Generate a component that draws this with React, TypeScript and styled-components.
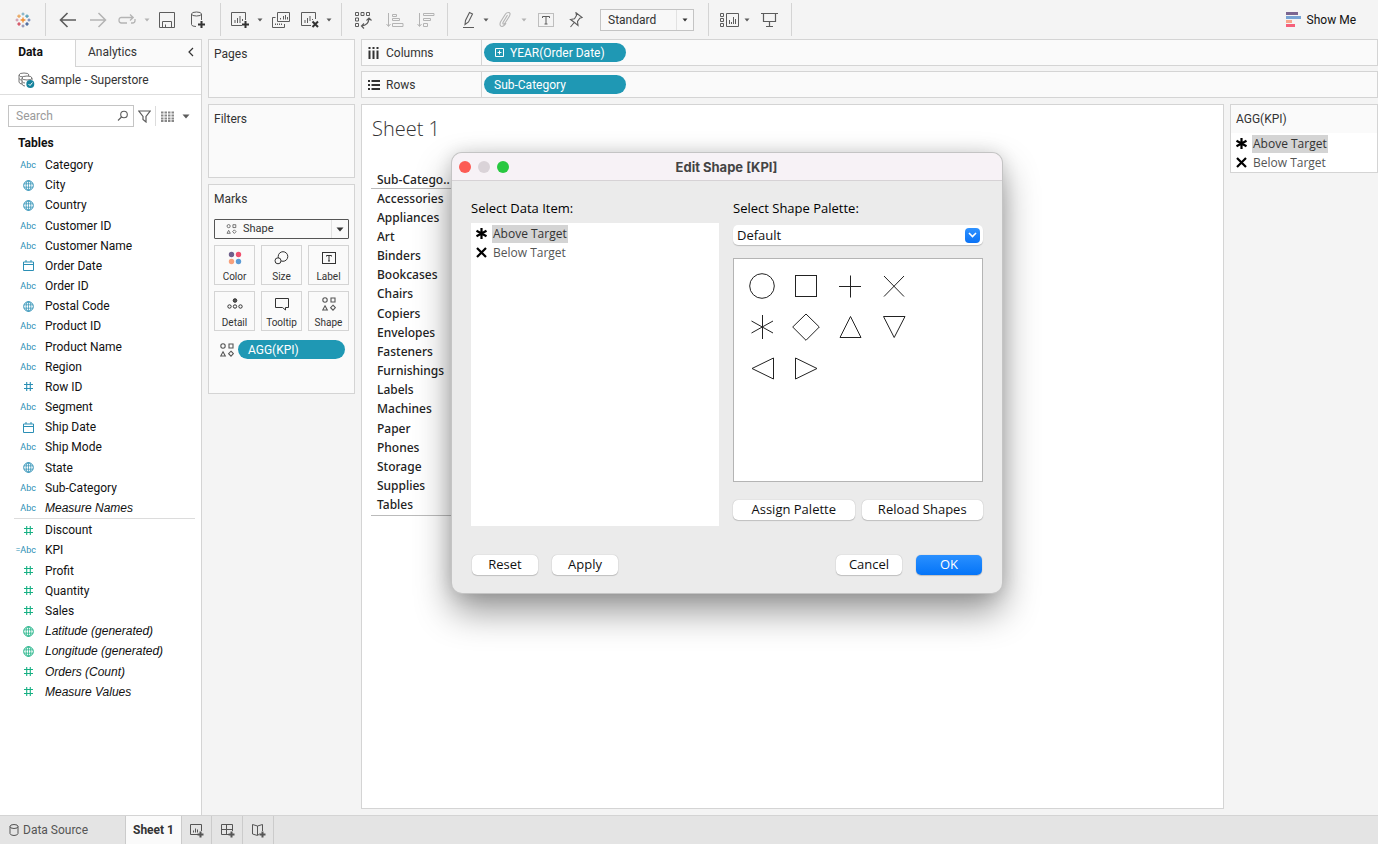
import React from "react";
import styled, { createGlobalStyle, css } from "styled-components";

const ui = `Roboto, "Liberation Sans", sans-serif`;
const viz = `"Open Sans", "Noto Sans", sans-serif`;
const mac = `"Open Sans", "Noto Sans", sans-serif`;
const teal = "#1f98b4";
const dim = "#2b8fb5";
const meas = "#17b083";
const line = "#d4d4d4";

const Global = createGlobalStyle`
  *, *::before, *::after { box-sizing: border-box; }
  body { margin: 0; font: 12px/16px ${ui}; color: #333; background: #f4f4f4; }
  button, input, select { font: inherit; color: inherit; margin: 0; }
  ul { list-style: none; margin: 0; padding: 0; }
  h1, h2, h3 { margin: 0; font-weight: 400; }
  svg { display: block; flex: none; }
`;

/* ---------- page ---------- */
const Page = styled.div`
  position: relative;
  min-height: 100vh;
  display: flex;
  flex-direction: column;
`;
const Main = styled.main`
  flex: 1;
  display: flex;
`;

/* ---------- toolbar ---------- */
const Toolbar = styled.header`
  display: flex;
  align-items: center;
  height: 39px;
  background: #f4f4f4;
`;
const Group = styled.div<{ $pad?: string }>`
  display: flex;
  align-items: center;
  height: 33px;
  padding: ${(p) => p.$pad ?? "0 5px"};
  border-right: 1px solid ${line};
`;
const Tool = styled.button<{ $w: number; $off?: boolean }>`
  width: ${(p) => p.$w}px;
  height: 26px;
  padding: 0;
  border: 0;
  background: none;
  color: ${(p) => (p.$off ? "#b4b4b4" : "#5c5c5c")};
  display: flex;
  align-items: center;
  justify-content: center;
`;
const ShowMe = styled.button`
  margin-left: auto;
  margin-right: 22px;
  padding: 0;
  border: 0;
  background: none;
  color: #111;
  display: flex;
  align-items: center;
  gap: 5px;
`;
const SelectWrap = styled.div`
  position: relative;
  display: flex;
  align-items: center;
`;
const FitWrap = styled(SelectWrap)`
  margin-left: 11px;
`;
const FitSelect = styled.select`
  appearance: none;
  width: 94px;
  height: 22px;
  padding: 0 7px;
  border: 1px solid #c4c4c4;
  border-radius: 0;
  background: #f8f8f8;
`;
const SelectArrow = styled.span<{ $w: number }>`
  position: absolute;
  right: 1px;
  top: 1px;
  bottom: 1px;
  width: ${(p) => p.$w}px;
  border-left: 1px solid #e2e2e2;
  display: flex;
  align-items: center;
  justify-content: center;
  pointer-events: none;
`;

/* ---------- data pane ---------- */
const DataPane = styled.aside`
  width: 202px;
  flex: none;
  background: #fff;
  border-top: 1px solid ${line};
  border-right: 1px solid ${line};
  color: #111;
`;
const Tabs = styled.div`
  display: flex;
  height: 27px;
`;
const Tab = styled.button<{ $on?: boolean }>`
  border: 0;
  padding: 0 0 3px;
  background: #fff;
  ${(p) =>
    p.$on
      ? css`
          width: 75px;
          padding-right: 14px;
          font-weight: 700;
        `
      : css`
          flex: 1;
          padding-left: 12px;
          padding-right: 6px;
          background: #fafafa;
          border-left: 1px solid ${line};
          border-bottom: 1px solid ${line};
          color: #333;
          display: flex;
          align-items: center;
          justify-content: space-between;
        `}
`;
const Source = styled.div`
  display: flex;
  align-items: center;
  gap: 6px;
  height: 28px;
  padding: 0 18px 1px;
  border-bottom: 1px solid #dedede;
  color: #333;
`;
const SearchRow = styled.div`
  display: flex;
  align-items: center;
  margin-top: 10px;
  padding-left: 8px;
  height: 22px;
  color: #5c5c5c;
`;
const SearchBox = styled.label`
  position: relative;
  width: 126px;
  height: 22px;
  svg { position: absolute; right: 5px; top: 5px; }
`;
const SearchInput = styled.input`
  width: 100%;
  height: 22px;
  padding: 0 24px 0 7px;
  border: 1px solid #c4c4c4;
  background: #fff;
  &::placeholder { color: #9a9a9a; opacity: 1; }
`;
const Plain = styled.button<{ $w: number; $rule?: boolean }>`
  width: ${(p) => p.$w}px;
  height: 20px;
  padding: 0;
  border: 0;
  border-right: ${(p) => (p.$rule ? "1px solid #dcdcdc" : "0")};
  background: none;
  display: flex;
  align-items: center;
  justify-content: center;
`;
const TablesTitle = styled.h2`
  margin: 8px 0 4px 18px;
  font-size: 12px;
  line-height: 16px;
  font-weight: 700;
`;
const Fields = styled.ul<{ $h: number; $rule?: boolean }>`
  display: grid;
  grid-auto-rows: 1fr;
  height: ${(p) => p.$h}px;
  margin: 0 6px 1px 14px;
  border-bottom: ${(p) => (p.$rule ? "1px solid #dcdcdc" : "0")};
`;
const Field = styled.li<{ $italic?: boolean }>`
  display: flex;
  align-items: center;
  white-space: nowrap;
  ${(p) => p.$italic && css`font-family: "Liberation Sans", sans-serif; font-style: italic;`}
`;
const FieldIcon = styled.span<{ $c: string }>`
  width: 31px;
  flex: none;
  padding-right: 9px;
  color: ${(p) => p.$c};
  font-family: ${ui};
  font-size: 9px;
  font-style: normal;
  display: flex;
  justify-content: flex-end;
`;
const Glyph = styled.span`
  width: 16px;
  display: flex;
  justify-content: center;
`;

/* ---------- cards ---------- */
const Cards = styled.section`
  width: 159px;
  flex: none;
  padding: 0 6px;
  display: flex;
  flex-direction: column;
  gap: 6px;
`;
const Card = styled.div<{ $h: number }>`
  min-height: ${(p) => p.$h}px;
  border: 1px solid ${line};
  background: #fafafa;
  padding: 6px 5px;
`;
const CardTitle = styled.h2`
  font-size: 12px;
  line-height: 16px;
`;
const MarkSelect = styled.select`
  appearance: none;
  width: 100%;
  height: 20px;
  padding: 0 28px;
  border: 1px solid #555;
  border-radius: 1px;
  background: #fafafa;
  font-size: 11px;
`;
const MarkSelectWrap = styled(SelectWrap)`
  margin: 12px 0 6px;
`;
const SelectGlyph = styled.span`
  position: absolute;
  left: 12px;
  pointer-events: none;
`;
const MarkGrid = styled.div`
  display: grid;
  grid-template-columns: repeat(3, 1fr);
  gap: 6px;
`;
const MarkButton = styled.button`
  height: 40px;
  padding: 4px 0 0;
  border: 1px solid ${line};
  background: #fafafa;
  font-size: 10px;
  line-height: 14px;
  display: flex;
  flex-direction: column;
  align-items: center;
  justify-content: center;
  gap: 4px;
  svg { height: 16px; }
`;
const PillRow = styled.div`
  display: flex;
  align-items: center;
  padding: 9px 4px 0 6px;
  gap: 4px;
`;
const Pill = styled.button<{ $grow?: boolean }>`
  width: ${(p) => (p.$grow ? "auto" : "142px")};
  flex: ${(p) => (p.$grow ? "1" : "none")};
  height: 19px;
  padding: 0 10px;
  border: 0;
  border-radius: 10px;
  background: ${teal};
  color: #fff;
  text-align: left;
  display: flex;
  align-items: center;
  gap: 5px;
`;

/* ---------- shelves and view ---------- */
const Work = styled.section`
  flex: 1;
  min-width: 0;
  display: flex;
  flex-direction: column;
  gap: 5px;
`;
const Shelf = styled.div`
  display: flex;
  height: 27px;
  border: 1px solid ${line};
  background: #fafafa;
`;
const ShelfLabel = styled.div`
  width: 120px;
  padding-left: 5px;
  border-right: 1px solid ${line};
  display: flex;
  align-items: center;
  gap: 6px;
`;
const ShelfDrop = styled.div`
  flex: 1;
  padding: 0 2px;
  display: flex;
  align-items: center;
`;
const ViewRow = styled.div`
  flex: 1;
  display: flex;
  gap: 6px;
  padding: 1px 0 6px;
`;
const View = styled.div`
  flex: 1;
  border: 1px solid ${line};
  background: #fff;
  padding: 10px 9px;
  font-family: ${viz};
`;
const SheetTitle = styled.h1`
  padding-left: 1px;
  font-size: 20px;
  line-height: 28px;
  font-weight: 300;
`;
const CrossTab = styled.table`
  width: 480px;
  height: 344px;
  margin-top: 29px;
  border-collapse: collapse;
  border-bottom: 1px solid #bbb;
  font-family: "Noto Sans", ${viz};
  font-size: 12px;
  line-height: 16px;
  th { padding: 0 6px; text-align: left; font-weight: 500; color: #222; }
  thead th { border-bottom: 1px solid #bbb; }
`;
const Legend = styled.aside`
  width: 148px;
  align-self: flex-start;
  border: 1px solid ${line};
  background: #fff;
`;
const LegendTitle = styled.h2`
  height: 28px;
  padding: 6px 5px;
  font-size: 12px;
  line-height: 16px;
  background: #fafafa;
`;
const Items = styled.ul`
  font-family: ${viz};
  padding: 1px 4px 0;
`;
const Item = styled.li<{ $on?: boolean }>`
  display: flex;
  align-items: center;
  gap: 4px;
  height: 19px;
  color: ${(p) => (p.$on ? "#333" : "#555")};
  span {
    padding: 0 1px;
    line-height: 18px;
    background: ${(p) => (p.$on ? "#d4d4d4" : "none")};
  }
`;

/* ---------- bottom bar ---------- */
const Bottom = styled.footer`
  display: flex;
  height: 29px;
  border-top: 1px solid ${line};
  background: #e4e4e4;
`;
const BottomTab = styled.button<{ $w: number; $on?: boolean; $start?: boolean }>`
  width: ${(p) => p.$w}px;
  padding: 0 0 0 ${(p) => (p.$start ? 9 : 0)}px;
  border: 0;
  border-right: 1px solid #cbcbcb;
  background: ${(p) => (p.$on ? "#fafafa" : "none")};
  color: ${(p) => (p.$on ? "#333" : "#555")};
  font-weight: ${(p) => (p.$on ? 700 : 400)};
  display: flex;
  align-items: center;
  justify-content: ${(p) => (p.$start ? "flex-start" : "center")};
  gap: 4px;
`;

/* ---------- dialog ---------- */
const Dialog = styled.div`
  position: absolute;
  left: 452px;
  top: 153px;
  width: 550px;
  border-radius: 10px;
  background: #ebebeb;
  box-shadow: 0 0 0 1px #c4c4c4, 0 18px 36px rgba(0, 0, 0, 0.42), 0 0 18px rgba(0, 0, 0, 0.14);
  font: 13px/16px ${mac};
  color: #111;
`;
const TitleBar = styled.div`
  display: grid;
  grid-template-columns: 1fr auto 1fr;
  align-items: center;
  height: 28px;
  padding: 0 8px 0 7px;
  border-bottom: 1px solid #d6d2d5;
  border-radius: 10px 10px 0 0;
  background: #f7f2f6;
`;
const Lights = styled.div`
  display: flex;
  gap: 7px;
`;
const Light = styled.button<{ $c: string }>`
  width: 12px;
  height: 12px;
  padding: 0;
  border: 0;
  border-radius: 50%;
  background: ${(p) => p.$c};
`;
const DialogTitle = styled.h2`
  font: 700 13px/16px Inter, ${ui};
  color: #444;
`;
const Panels = styled.div`
  display: flex;
  gap: 14px;
  padding: 19px 19px 0;
`;
const Panel = styled.div<{ $list?: boolean }>`
  flex: ${(p) => (p.$list ? "0 0 248px" : "1")};
`;
const PanelLabel = styled.label`
  display: block;
  margin-bottom: 7px;
  color: #000;
`;
const ItemBox = styled.div`
  height: 303px;
  background: #fff;
  font-size: 12px;
`;
const PaletteSelect = styled.select`
  appearance: none;
  width: 100%;
  height: 20px;
  padding: 0 4px;
  border: 0;
  border-radius: 5px;
  background: #fff;
  box-shadow: 0 1px 1px rgba(0, 0, 0, 0.2);
`;
const PaletteWrap = styled(SelectWrap)`
  margin: 9px 0 13px;
`;
const BlueArrow = styled.span`
  position: absolute;
  right: 3px;
  width: 15px;
  height: 15px;
  border-radius: 4px;
  background: linear-gradient(#2f92ff, #0a72f5);
  display: flex;
  align-items: center;
  justify-content: center;
  pointer-events: none;
`;
const ShapeBox = styled.div`
  height: 224px;
  padding: 6px 56px 6px 6px;
  border: 1px solid #b4b4b4;
  background: #fff;
  display: flex;
  flex-wrap: wrap;
  align-content: flex-start;
`;
const ShapeCell = styled.button`
  width: 44px;
  height: 41px;
  padding: 0;
  border: 0;
  background: none;
  display: flex;
  align-items: center;
  justify-content: center;
`;
const PaletteButtons = styled.div`
  display: flex;
  gap: 7px;
  margin-top: 18px;
`;
const MacButton = styled.button<{ $primary?: boolean; $grow?: boolean }>`
  flex: ${(p) => (p.$grow ? "1" : "none")};
  width: ${(p) => (p.$grow ? "auto" : "66px")};
  height: 20px;
  padding: 0 0 2px;
  border: 0;
  border-radius: 5px;
  background: ${(p) => (p.$primary ? "linear-gradient(#2a90ff, #0474f8)" : "#fff")};
  color: ${(p) => (p.$primary ? "#fff" : "#111")};
  box-shadow: 0 0 1px rgba(0, 0, 0, 0.3), 0 1px 1px rgba(0, 0, 0, 0.16);
`;
const Actions = styled.div`
  display: flex;
  gap: 14px;
  padding: 29px 20px 18px;
`;
const Push = styled.span`
  flex: 1;
`;

/* ---------- drawings ---------- */
type Kids = { w?: number; h?: number; s?: number; children: React.ReactNode };
const Svg = ({ w = 16, h = 16, s = 1, children }: Kids) => (
  <svg width={w} height={h} viewBox={`0 0 ${w} ${h}`} fill="none" stroke="currentColor" strokeWidth={s} aria-hidden="true">
    {children}
  </svg>
);
const Caret = ({ big }: { big?: boolean }) =>
  big ? (
    <Svg w={8} h={5}><path d="M0.5 0.5H7.5L4 4.5Z" fill="currentColor" stroke="none" /></Svg>
  ) : (
    <Svg w={6} h={4}><path d="M0.5 0.5H5.5L3 3.5Z" fill="currentColor" stroke="none" /></Svg>
  );

const plus = (x: number, y: number, r: number, c: string, s: number) => (
  <path key={`${x}-${y}`} d={`M${x - r} ${y}H${x + r}M${x} ${y - r}V${y + r}`} stroke={c} strokeWidth={s} />
);
const Logo = () => (
  <Svg>
    {plus(8, 8, 2.4, "#f08a2c", 1.3)}
    {plus(8, 2, 1.5, "#6aa5bd", 1)}
    {plus(8, 14, 1.5, "#7a7fa8", 1)}
    {plus(2, 8, 1.5, "#c98aa0", 1)}
    {plus(14, 8, 1.5, "#5f78b0", 1)}
    {plus(4, 4.2, 1.8, "#e9a052", 1.2)}
    {plus(12, 4.2, 1.8, "#4b9ab5", 1.2)}
    {plus(4, 12, 1.8, "#d0354a", 1.2)}
    {plus(12, 12, 1.8, "#2c4f8c", 1.2)}
  </Svg>
);
const Back = () => <Svg w={18} s={1.6}><path d="M17 8H1.5M8.5 1L1.5 8L8.5 15" /></Svg>;
const Forward = () => <Svg w={18} s={1.5}><path d="M1 8H16.5M9.5 1L16.5 8L9.5 15" /></Svg>;
const Redo = () => (
  <Svg w={18} h={11} s={1.3}><path d="M9 9H3.500Q1 9 1 6.200T3.500 3.500H15M12 0.500L15.200 3.500L12 6.500M13 9H14.500Q17 9 17 6.500V5" /></Svg>
);
const Save = () => <Svg><path d="M0.5 0.5H15.500V15.500H0.500ZM3.500 15V9.500H12.500V15M6.500 15V12.500" /></Svg>;
const Db = () => (
  <Svg w={16} h={18}>
    <ellipse cx="6.500" cy="3" rx="5" ry="2" />
    <path d="M1.500 3V13.500Q1.500 15.500 6 15.500M11.500 3V9" />
    <path d="M11.500 10V17M8 13.500H15" stroke="#333" strokeWidth="2" />
  </Svg>
);
const NewSheet = () => (
  <Svg w={19} h={18}>
    <path d="M11 14.500H0.500V1.500H14.500V9M4 12V9M6.500 12V7M9 12V5M11.500 10V8" />
    <path d="M14.500 10V17M11 13.500H18" stroke="#333" strokeWidth="2" />
  </Svg>
);
const Duplicate = () => (
  <Svg w={18} h={16}>
    <path d="M5.500 0.500H17.500V9.500H5.500ZM8.500 7.500V6M11.500 7.500V4M13.500 7.500V3M15.500 7.500V5M3.500 5.500H0.500V15.500H12.500V12M3.500 13V11.500M5.500 13V11.500M7.500 13V11.500M9.500 13V11.500" />
  </Svg>
);
const Clear = () => (
  <Svg w={19} h={18}>
    <path d="M10 14.500H0.500V1.500H14.500V8M4 12V9M6.500 12V7M9 10V5M11.500 9V8" />
    <path d="M11.500 10.500L17 16M17 10.500L11.500 16" stroke="#333" strokeWidth="2" />
  </Svg>
);
const Swap = () => (
  <Svg w={18} h={18}>
    <path d="M1.500 1.500H4.500V4.500H1.500ZM7 1.500H10V4.500H7ZM12.500 1.500H15.500V4.500H12.500ZM1.500 7H4.500V10H1.500ZM1.500 12.500H4.500V15.500H1.500Z" />
    <path d="M7.500 15Q14.500 14.500 15 7.500M10 12.500L7.500 15L10 17.500M12.500 9.500L15 7L17.500 9.500" strokeWidth="1.200" />
  </Svg>
);
const SortAsc = () => (
  <Svg w={18}>
    <path d="M2.500 1V14M0.500 12L2.500 14.500L4.500 12M6.500 2.500H10.500V4.500H6.500ZM6.500 6.500H13.500V8.500H6.500ZM6.500 11.500H17V14.500H6.500Z" />
  </Svg>
);
const SortDesc = () => (
  <Svg w={18}>
    <path d="M2.500 1V14M0.500 12L2.500 14.500L4.500 12M6.500 1.500H17V3.500H6.500ZM6.500 6.500H13.500V8.500H6.500ZM6.500 11.500H10.500V14.500H6.500Z" />
  </Svg>
);
const Highlight = () => <Svg w={14} h={17} s={1.1}><path d="M1 16.500H12M3 13.500L3.500 9.500L7.500 1.500L10.500 3L6.500 11L3 13.500Z" /></Svg>;
const Clip = () => (
  <Svg w={14} h={17} s={1.1}><path d="M9.500 4L5 11.500Q4.500 13.500 6 13Q7 12.500 11.500 5Q13 1.500 10.500 1.500Q8.500 1.500 7.500 3L2.500 11Q1 15 4 15.500Q6 15.500 8 12" /></Svg>
);
const TextMark = () => (
  <Svg w={16} h={14}>
    <rect x="0.5" y="0.5" width="15" height="13" strokeDasharray="1 1" stroke="#888" />
    <path d="M4.500 5V3.500H11.500V5M8 3.500V11M6.500 11H9.500" />
  </Svg>
);
const MarkLabel = () => (
  <Svg w={14} h={12}>
    <rect x="0.5" y="0.5" width="13" height="11" />
    <path d="M4.500 4.500V3.500H9.500V4.500M7 3.500V9M6 9H8" />
  </Svg>
);
const Pin = () => (
  <Svg w={14} h={16} s={1.1}><path d="M7 0.800L13.200 5.500L10.800 6.200L8.500 9.500L9 13.500L5.500 10.500L1.500 7.500L5.500 6.800L7.500 3.500ZM5.200 10.500L1.500 15" /></Svg>
);
const Cards4 = () => (
  <Svg w={20} h={14}>
    <path d="M6.500 0.500H18.500V13.500H6.500ZM0.500 0.500H3.500V3.500H0.500ZM0.500 5.500H3.500V8.500H0.500ZM0.500 10.500H3.500V13.500H0.500ZM9.500 11V7M11.500 11V9M13.500 11V4M15.500 11V6" />
  </Svg>
);
const Present = () => <Svg w={17} s={1.2}><path d="M0 1.500H17M2.500 2V9.500H14.500V2M8.500 9.500V14.500M5 14.500H12" /></Svg>;
const ShowMeIcon = () => (
  <Svg w={16} h={15}>
    <path d="M0 1.500H12" stroke="#7b6691" strokeWidth="3" />
    <path d="M0 5.500H15" stroke="#77a3d4" strokeWidth="3" />
    <path d="M0 9.500H6" stroke="#f8a58c" strokeWidth="3" />
    <path d="M0 13.500H9" stroke="#f5607a" strokeWidth="3" />
  </Svg>
);
const Globe = () => (
  <Svg w={11} h={11}>
    <circle cx="5.500" cy="5.500" r="4.800" />
    <ellipse cx="5.500" cy="5.500" rx="2.300" ry="4.800" strokeWidth="0.800" />
    <path d="M1 3.800H10M1 7.200H10M5.500 1V10" strokeWidth="0.700" />
  </Svg>
);
const Cal = () => <Svg w={11} h={11}><path d="M0.500 2H10.500V10.500H0.500ZM0.500 4.500H10.500M3 0V2M8 0V2" /></Svg>;
const Hash = () => <Svg w={11} h={11} s={1.1}><path d="M1 3.500H10M1 7.500H10M3.700 1V10M7.300 1V10" /></Svg>;
const Shapes = ({ small }: { small?: boolean }) => (
  <svg width={small ? 11 : 14} height={small ? 10 : 14} viewBox="0 0 14 14" fill="none" stroke="#555" strokeWidth="1.1" aria-hidden="true">
    <circle cx="3" cy="3" r="2.200" />
    <path d="M9 1H13V5H9ZM3 8.800L5.300 13H0.700ZM11 8.200L13.400 10.700L11 13.200L8.600 10.700Z" />
  </svg>
);
const DbCheck = () => (
  <Svg w={17} h={17}>
    <g stroke="#777">
      <ellipse cx="6" cy="3" rx="5" ry="2" />
      <path d="M1 3V10Q1.500 12 4 12M1 6.500Q2 8 4 8.200" />
      <ellipse cx="9" cy="6" rx="5" ry="2" fill="#fff" />
      <path d="M4 6V12Q4.500 14 7 14M14 6V8M4 9.500Q5 11 7 11" />
    </g>
    <circle cx="12.300" cy="12" r="4" fill="#16839c" stroke="none" />
    <path d="M10.500 12L12 13.500L14.500 10.500" stroke="#fff" />
  </Svg>
);
const Star = () => <Svg w={13} h={13} s={2.2}><path d="M6.500 1V12M1.500 3.700L11.500 9.300M11.500 3.700L1.500 9.300" stroke="#000" /></Svg>;
const Cross = () => <Svg w={13} h={13} s={2.2}><path d="M2 2L11 11M11 2L2 11" stroke="#000" /></Svg>;

const MarkColor = () => (
  <Svg w={14} h={14}>
    <g stroke="none">
      <circle cx="3.500" cy="3.500" r="2.700" fill="#6f5f8c" /><circle cx="10.500" cy="3.500" r="2.700" fill="#f0506e" />
      <circle cx="3.500" cy="10.500" r="2.700" fill="#f7a07c" /><circle cx="10.500" cy="10.500" r="2.700" fill="#5b9bd5" />
    </g>
  </Svg>
);
const MarkSize = () => <Svg w={15} h={14}><circle cx="9" cy="5.500" r="4.800" /><circle cx="4" cy="9.800" r="3" fill="#fafafa" /></Svg>;
const MarkDetail = () => (
  <Svg w={16} h={14}>
    <circle cx="8" cy="3.500" r="1.800" fill="#555" /><circle cx="2.500" cy="9.500" r="1.700" /><circle cx="8" cy="9.500" r="1.700" /><circle cx="13.500" cy="9.500" r="1.700" />
  </Svg>
);
const MarkTip = () => <Svg w={14} h={14}><path d="M0.500 1.500H13.500V10.500H10.500V13L7.500 10.500H0.500Z" /></Svg>;

/* ---------- data ---------- */
type Kind = "abc" | "geo" | "date" | "num" | "calc";
type F = [Kind, string, boolean?];
const dimensions: F[] = [
  ["abc", "Category"], ["geo", "City"], ["geo", "Country"], ["abc", "Customer ID"], ["abc", "Customer Name"],
  ["date", "Order Date"], ["abc", "Order ID"], ["geo", "Postal Code"], ["abc", "Product ID"], ["abc", "Product Name"],
  ["abc", "Region"], ["num", "Row ID"], ["abc", "Segment"], ["date", "Ship Date"], ["abc", "Ship Mode"],
  ["geo", "State"], ["abc", "Sub-Category"], ["abc", "Measure Names", true],
];
const measures: F[] = [
  ["num", "Discount"], ["calc", "KPI"], ["num", "Profit"], ["num", "Quantity"], ["num", "Sales"],
  ["geo", "Latitude (generated)", true], ["geo", "Longitude (generated)", true],
  ["num", "Orders (Count)", true], ["num", "Measure Values", true],
];
const subCategories = [
  "Accessories", "Appliances", "Art", "Binders", "Bookcases", "Chairs", "Copiers", "Envelopes", "Fasteners",
  "Furnishings", "Labels", "Machines", "Paper", "Phones", "Storage", "Supplies", "Tables",
];
const kindIcon: Record<Kind, React.ReactNode> = {
  abc: "Abc", calc: "=Abc",
  geo: <Glyph><Globe /></Glyph>, date: <Glyph><Cal /></Glyph>, num: <Glyph><Hash /></Glyph>,
};
const FieldList = ({ items, color, h, rule }: { items: F[]; color: string; h: number; rule?: boolean }) => (
  <Fields $h={h} $rule={rule}>
    {items.map(([k, name, it]) => (
      <Field key={name} $italic={it}>
        <FieldIcon $c={k === "calc" ? dim : color}>{kindIcon[k]}</FieldIcon>
        {name}
      </Field>
    ))}
  </Fields>
);
const TargetItems = () => (
  <Items>
    <Item $on><Star /><span>Above Target</span></Item>
    <Item><Cross /><span>Below Target</span></Item>
  </Items>
);

const paletteShapes: [string, React.ReactNode][] = [
  ["Circle", <circle cx="14" cy="14" r="12.300" />],
  ["Square", <rect x="3.500" y="3.500" width="21" height="21" />],
  ["Plus", <path d="M3 14.500H25M14.500 3.500V25.500" />],
  ["Cross", <path d="M4 4L24 24.500M24 4L4 24.500" />],
  ["Asterisk", <path d="M14.500 2V26M3.500 8L25 20M25 8L3.500 20" />],
  ["Diamond", <path d="M14 1L27.300 14L14 27.300L0.700 14Z" />],
  ["Up triangle", <path d="M14.500 3.500L25 24.500H4Z" />],
  ["Down triangle", <path d="M3.500 3.500H25L14.200 24.500Z" />],
  ["Left triangle", <path d="M25.500 4V25L4 14.500Z" />],
  ["Right triangle", <path d="M3.500 4V25L25 14.500Z" />],
];

export default function App() {
  return (
    <>
      <Global />
      <Page>
        <Toolbar>
          <Group $pad="0 7px 0 8px"><Tool $w={30} aria-label="Start page"><Logo /></Tool></Group>
          <Group $pad="0 6px">
            <Tool $w={31} aria-label="Undo"><Back /></Tool>
            <Tool $w={30} $off aria-label="Redo"><Forward /></Tool>
            <Tool $w={28} $off aria-label="Replay"><Redo /></Tool>
            <Tool $w={11} $off aria-label="Replay options"><Caret /></Tool>
            <Tool $w={30} aria-label="Save"><Save /></Tool>
            <Tool $w={32} aria-label="New data source"><Db /></Tool>
          </Group>
          <Group $pad="0 7px 0 4px">
            <Tool $w={30} aria-label="New worksheet"><NewSheet /></Tool>
            <Tool $w={10} aria-label="New options"><Caret /></Tool>
            <Tool $w={31} aria-label="Duplicate"><Duplicate /></Tool>
            <Tool $w={28} aria-label="Clear"><Clear /></Tool>
            <Tool $w={10} aria-label="Clear options"><Caret /></Tool>
          </Group>
          <Group $pad="0 7px 0 5px">
            <Tool $w={31} aria-label="Swap"><Swap /></Tool>
            <Tool $w={33} $off aria-label="Sort ascending"><SortAsc /></Tool>
            <Tool $w={29} $off aria-label="Sort descending"><SortDesc /></Tool>
          </Group>
          <Group $pad="0 14px 0 8px">
            <Tool $w={25} aria-label="Highlight"><Highlight /></Tool>
            <Tool $w={10} aria-label="Highlight options"><Caret /></Tool>
            <Tool $w={28} $off aria-label="Group members"><Clip /></Tool>
            <Tool $w={10} $off aria-label="Group options"><Caret /></Tool>
            <Tool $w={34} aria-label="Show mark labels"><TextMark /></Tool>
            <Tool $w={26} aria-label="Fix axes"><Pin /></Tool>
            <FitWrap>
              <FitSelect aria-label="Fit"><option>Standard</option></FitSelect>
              <SelectArrow $w={17}><Caret /></SelectArrow>
            </FitWrap>
          </Group>
          <Group $pad="0 5px 0 9px">
            <Tool $w={24} aria-label="Show cards"><Cards4 /></Tool>
            <Tool $w={10} aria-label="Card options"><Caret /></Tool>
            <Tool $w={34} aria-label="Presentation mode"><Present /></Tool>
          </Group>
          <ShowMe><ShowMeIcon />Show Me</ShowMe>
        </Toolbar>

        <Main>
          <DataPane>
            <Tabs>
              <Tab $on>Data</Tab>
              <Tab>Analytics<Svg w={8} h={10} s={1.2}><path d="M6 1L2 5L6 9" /></Svg></Tab>
            </Tabs>
            <Source><DbCheck />Sample - Superstore</Source>
            <SearchRow>
              <SearchBox>
                <SearchInput type="text" placeholder="Search" aria-label="Search" />
                <Svg w={12} h={12} s={1.1}><circle cx="7" cy="4.500" r="3.300" /><path d="M4.500 7L1 10.500" /></Svg>
              </SearchBox>
              <Plain $w={22} $rule aria-label="Filter fields"><Svg w={13} h={13} s={1.2}><path d="M0.800 1H12.200L8 6.500V12L5 9.500V6.500Z" /></Svg></Plain>
              <Plain $w={22} aria-label="View fields">
                <Svg w={13} h={11} s={2}><path d="M0 1.500H13M0 4.500H13M0 7.500H13M0 10H13" strokeDasharray="2.500 1" stroke="#888" /></Svg>
              </Plain>
              <Plain $w={16} aria-label="Field options"><Caret big /></Plain>
            </SearchRow>
            <TablesTitle>Tables</TablesTitle>
            <FieldList items={dimensions} color={dim} h={364} rule />
            <FieldList items={measures} color={meas} h={182} />
          </DataPane>

          <Cards>
            <Card $h={59}><CardTitle>Pages</CardTitle></Card>
            <Card $h={74}><CardTitle>Filters</CardTitle></Card>
            <Card $h={210}>
              <CardTitle>Marks</CardTitle>
              <MarkSelectWrap>
                <MarkSelect aria-label="Mark type"><option>Shape</option></MarkSelect>
                <SelectGlyph><Shapes small /></SelectGlyph>
                <SelectArrow $w={17}><Caret big /></SelectArrow>
              </MarkSelectWrap>
              <MarkGrid>
                <MarkButton><MarkColor />Color</MarkButton>
                <MarkButton><MarkSize />Size</MarkButton>
                <MarkButton><MarkLabel />Label</MarkButton>
                <MarkButton><MarkDetail />Detail</MarkButton>
                <MarkButton><MarkTip />Tooltip</MarkButton>
                <MarkButton><Shapes />Shape</MarkButton>
              </MarkGrid>
              <PillRow><Shapes /><Pill $grow>AGG(KPI)</Pill></PillRow>
            </Card>
          </Cards>

          <Work>
            <Shelf>
              <ShelfLabel>
                <Svg w={13} h={12} s={2}><path d="M2.500 0V2M6.500 0V2M10.500 0V2M2.500 3.500V12M6.500 3.500V12M10.500 3.500V12" /></Svg>Columns
              </ShelfLabel>
              <ShelfDrop>
                <Pill><Svg w={11} h={11}><path d="M1.500 1.500H9.500V9.500H1.500ZM3.500 5.500H7.500M5.500 3.500V7.500" /></Svg>YEAR(Order Date)</Pill>
              </ShelfDrop>
            </Shelf>
            <Shelf>
              <ShelfLabel>
                <Svg w={13} h={12} s={2}><path d="M1 2H3M1 6H3M1 10H3M4.500 2H13M4.500 6H13M4.500 10H13" /></Svg>Rows
              </ShelfLabel>
              <ShelfDrop><Pill>Sub-Category</Pill></ShelfDrop>
            </Shelf>
            <ViewRow>
              <View>
                <SheetTitle>Sheet 1</SheetTitle>
                <CrossTab>
                  <thead><tr><th scope="col">Sub-Catego..</th></tr></thead>
                  <tbody>{subCategories.map((s) => <tr key={s}><th scope="row">{s}</th></tr>)}</tbody>
                </CrossTab>
              </View>
              <Legend>
                <LegendTitle>AGG(KPI)</LegendTitle>
                <TargetItems />
              </Legend>
            </ViewRow>
          </Work>
        </Main>

        <Bottom>
          <BottomTab $w={126} $start>
            <Svg w={10} h={12}><ellipse cx="5" cy="2.500" rx="4" ry="2" /><path d="M1 2.500V9.500Q1.500 11.500 5 11.500T9 9.500V2.500" /></Svg>Data Source
          </BottomTab>
          <BottomTab $w={56} $on>Sheet 1</BottomTab>
          <BottomTab $w={30} aria-label="New worksheet">
            <Svg w={15} h={15}><path d="M9 11.500H1.500V1.500H12.500V8M4.500 9.500V7.500M6.500 9.500V5.500M8.500 9.500V6.500" /><path d="M11.500 8.500V14.500M8.500 11.500H14.500" strokeWidth="2" /></Svg>
          </BottomTab>
          <BottomTab $w={31} aria-label="New dashboard">
            <Svg w={15} h={15}><path d="M9 11.500H1.500V1.500H12.500V8M6.500 1.500V11.500M1.500 6.500H12.500" /><path d="M11.500 8.500V14.500M8.500 11.500H14.500" strokeWidth="2" /></Svg>
          </BottomTab>
          <BottomTab $w={31} aria-label="New story">
            <Svg w={15} h={15}><path d="M8.500 11L6.500 12.500L1.500 11V1.500L6.500 3L11.500 1.500V8M6.500 3V12" /><path d="M11.500 8.500V14.500M8.500 11.500H14.500" strokeWidth="2" /></Svg>
          </BottomTab>
        </Bottom>

        <Dialog role="dialog" aria-labelledby="dialog-title">
          <TitleBar>
            <Lights>
              <Light $c="#fc5b54" aria-label="Close" />
              <Light $c="#dad3d8" aria-label="Minimize" />
              <Light $c="#28c840" aria-label="Zoom" />
            </Lights>
            <DialogTitle id="dialog-title">Edit Shape [KPI]</DialogTitle>
            <span />
          </TitleBar>
          <Panels>
            <Panel $list>
              <PanelLabel as="div">Select Data Item:</PanelLabel>
              <ItemBox><TargetItems /></ItemBox>
            </Panel>
            <Panel>
              <PanelLabel htmlFor="palette">Select Shape Palette:</PanelLabel>
              <PaletteWrap>
                <PaletteSelect id="palette"><option>Default</option></PaletteSelect>
                <BlueArrow><Svg w={9} h={6} s={1.6}><path d="M1 1L4.500 4.500L8 1" stroke="#fff" /></Svg></BlueArrow>
              </PaletteWrap>
              <ShapeBox>
                {paletteShapes.map(([name, shape]) => (
                  <ShapeCell key={name} aria-label={name}>
                    <svg width="28" height="28" viewBox="0 0 28 28" fill="none" stroke="#222" aria-hidden="true">{shape}</svg>
                  </ShapeCell>
                ))}
              </ShapeBox>
              <PaletteButtons>
                <MacButton $grow>Assign Palette</MacButton>
                <MacButton $grow>Reload Shapes</MacButton>
              </PaletteButtons>
            </Panel>
          </Panels>
          <Actions>
            <MacButton>Reset</MacButton>
            <MacButton>Apply</MacButton>
            <Push />
            <MacButton>Cancel</MacButton>
            <MacButton $primary>OK</MacButton>
          </Actions>
        </Dialog>
      </Page>
    </>
  );
}
